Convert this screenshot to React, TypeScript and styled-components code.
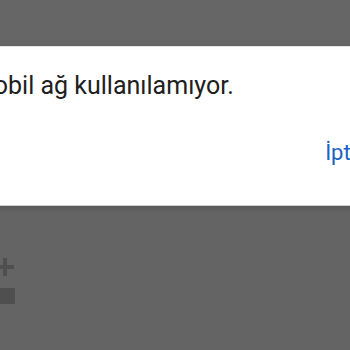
import styled, { createGlobalStyle } from 'styled-components'

const GlobalStyle = createGlobalStyle`
  html, body {
    margin: 0;
    padding: 0;
    background: #646464;
    overflow: hidden;
  }
  body {
    font-family: Roboto, "Noto Sans", "Liberation Sans", sans-serif;
  }
`

const Screen = styled.div`
  width: 350px;
  height: 350px;
  display: flex;
  flex-direction: column;
  overflow: hidden;
  background: #646464;
`

const StatusArea = styled.div`
  height: 46px;
  flex: none;
  background: #666666;
`

const DialogRow = styled.div`
  display: flex;
  justify-content: center;
  flex: none;
`

const Dialog = styled.div`
  flex: none;
  width: 440px;
  height: 160px;
  box-sizing: border-box;
  padding: 24px 27px 0 17px;
  background: #ffffff;
  border-top: 1px solid #e4e4e4;
  border-bottom: 1px solid #cfcfcf;
  box-shadow: 0 3px 6px rgba(0, 0, 0, 0.12);
  display: flex;
  flex-direction: column;
`

const Message = styled.p`
  margin: 0;
  font-size: 25px;
  line-height: 30px;
  color: #202020;
  white-space: nowrap;
`

const Actions = styled.div`
  margin-top: 39px;
  display: flex;
  justify-content: flex-end;
`

const TextButton = styled.button`
  border: 0;
  padding: 0;
  background: none;
  font-family: inherit;
  font-size: 22px;
  line-height: 26px;
  color: #1a62c2;
`

const Backdrop = styled.div`
  display: flex;
  flex-direction: column;
  gap: 12px;
  padding-top: 52px;
`

const DimIcon = styled.svg`
  display: block;
  color: #4f4f4f;
`

export default function App() {
  return (
    <>
      <GlobalStyle />
      <Screen>
        <StatusArea />
        <DialogRow>
          <Dialog>
            <Message>Mobil ağ kullanılamıyor.</Message>
            <Actions>
              <TextButton>İptal</TextButton>
            </Actions>
          </Dialog>
        </DialogRow>
        <Backdrop>
          <DimIcon width="16" height="18" viewBox="0 0 16 18">
            <rect x="3" y="0" width="4" height="18" fill="currentColor" />
            <rect x="-2" y="7" width="16" height="4" fill="currentColor" />
          </DimIcon>
          <DimIcon width="16" height="16" viewBox="0 0 16 16">
            <rect x="-2" y="0" width="17" height="16" rx="1" fill="currentColor" />
          </DimIcon>
        </Backdrop>
      </Screen>
    </>
  )
}
